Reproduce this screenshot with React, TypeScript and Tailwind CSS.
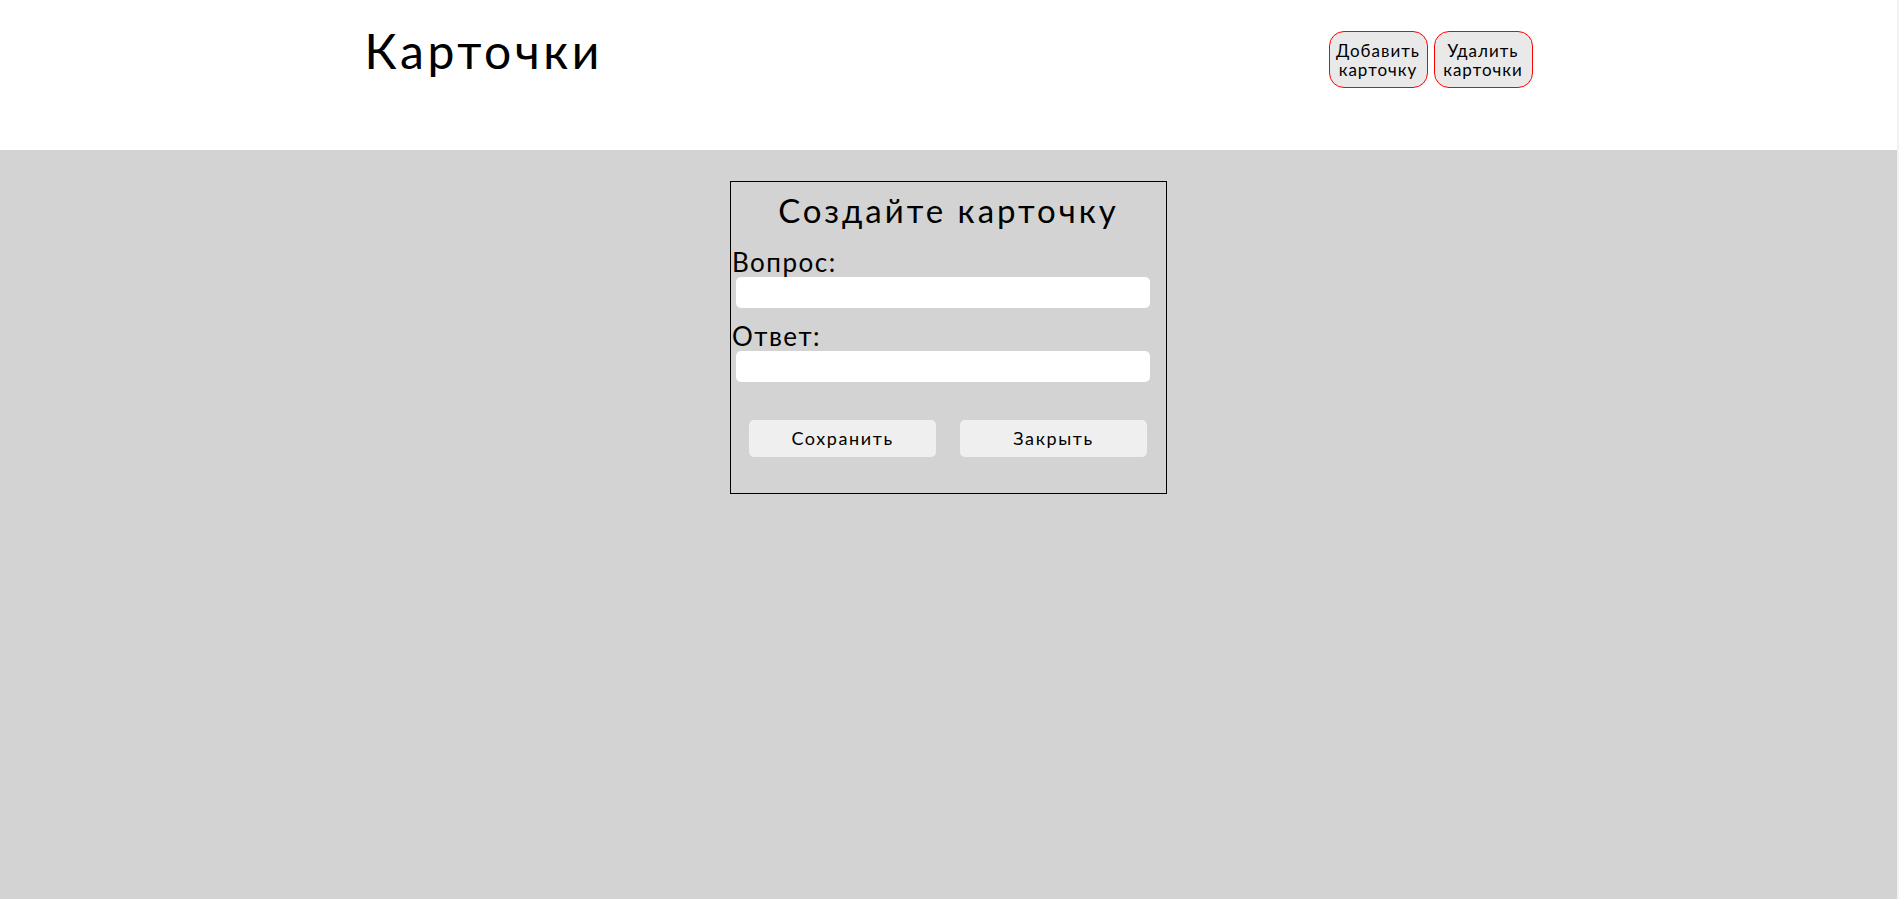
import React from "react";

export default function App() {
  const font = { fontFamily: "Lato, 'Noto Sans', sans-serif" };
  return (
    <div className="flex min-h-[899px] w-full" style={font}>
      <div className="flex flex-1 flex-col">
        <header className="h-[150px] bg-white">
          <div className="mx-auto flex w-[1168px] items-start justify-between">
            <h1 className="mt-[22px] text-[48px] leading-[58px] tracking-[3.6px] text-black">Карточки</h1>
            <div className="mt-[31px] flex gap-[6px]">
              <button className="h-[57px] w-[99px] rounded-[15px] border border-[#ff0000] bg-[#e9e9e9] text-[17px] leading-[19px] tracking-[1px] text-black">
                Добавить
                <br />
                карточку
              </button>
              <button className="h-[57px] w-[99px] rounded-[15px] border border-[#ff0000] bg-[#e9e9e9] text-[17px] leading-[19px] tracking-[1px] text-black">
                Удалить
                <br />
                карточки
              </button>
            </div>
          </div>
        </header>
        <main className="flex-1 bg-[#d3d3d3] pt-[31px]">
          <div className="mx-auto flex h-[313px] w-[437px] flex-col border border-black">
            <h2 className="mt-[8px] text-center text-[33px] leading-[40px] tracking-[3px] text-black">Создайте карточку</h2>
            <label className="mt-[17px] pl-[1px] text-[26px] leading-[30px] tracking-[1.5px] text-black">Вопрос:</label>
            <input className="ml-[5px] h-[31px] w-[414px] rounded-[5px] bg-white outline-none" />
            <label className="mt-[13px] pl-[1px] text-[26px] leading-[30px] tracking-[1.5px] text-black">Ответ:</label>
            <input className="ml-[5px] h-[31px] w-[414px] rounded-[5px] bg-white outline-none" />
            <div className="mt-[38px] flex gap-[24px] pl-[18px]">
              <button className="h-[37px] w-[187px] rounded-[5px] bg-[#efefef] text-[18px] tracking-[1.6px] text-black">Сохранить</button>
              <button className="h-[37px] w-[187px] rounded-[5px] bg-[#efefef] text-[18px] tracking-[1.6px] text-black">Закрыть</button>
            </div>
          </div>
        </main>
      </div>
      <div className="w-[2px] bg-[#f2f2f2]" />
    </div>
  );
}
